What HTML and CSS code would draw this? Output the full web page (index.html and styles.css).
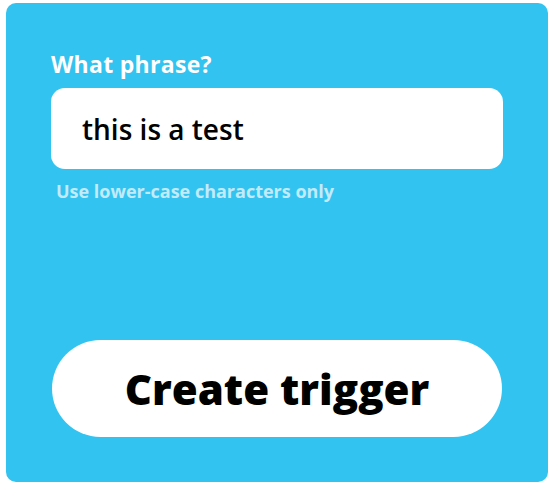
FILE: index.html
```html
<!DOCTYPE html>
<html lang="en">

<head>
    <meta charset="UTF-8">
    <meta name="viewport" content="width=device-width, initial-scale=1.0">
    <title>Create trigger</title>
    <link rel="stylesheet" href="styles.css">
</head>

<body>
    <div class="panel">
        <div class="field">
            <label class="field-label" for="phrase">What phrase?</label>
            <input type="text" id="phrase" class="field-input" value="this is a test">
            <div class="field-help">Use lower-case characters only</div>
        </div>
        <button class="create-btn">Create trigger</button>
    </div>
</body>

</html>
```

FILE: styles.css
```css
    body {
        font-family: "Open Sans", Lato, Arial, sans-serif;
        margin: 0;
        padding: 0;
        background-color: #ffffff;
    }

    .panel {
        margin: 3px 5px 0 6px;
        height: 479px;
        box-sizing: border-box;
        padding: 46px 45px 0 45px;
        background-color: #33c3f0;
        border-radius: 10px;
        display: flex;
        flex-direction: column;
    }

    .field {
        display: flex;
        flex-direction: column;
    }

    .field-label {
        color: #ffffff;
        font-size: 23px;
        font-weight: 700;
        line-height: 30px;
        letter-spacing: 0.3px;
        margin-bottom: 9px;
    }

    .field-input {
        height: 81px;
        box-sizing: border-box;
        border: none;
        border-radius: 14px;
        padding: 0 31px;
        font-family: inherit;
        font-size: 28px;
        font-weight: 600;
        color: #000000;
        background-color: #ffffff;
        outline: none;
    }

    .field-help {
        margin-top: 11px;
        padding-left: 5px;
        color: #c2ebfa;
        font-size: 18px;
        line-height: 22px;
        font-weight: 700;
    }

    .create-btn {
        margin-top: 138px;
        margin-left: 1px;
        margin-right: 1px;
        height: 97px;
        border: none;
        border-radius: 49px;
        background-color: #ffffff;
        color: #000000;
        font-family: inherit;
        font-size: 42px;
        font-weight: 800;
        cursor: pointer;
    }
```
